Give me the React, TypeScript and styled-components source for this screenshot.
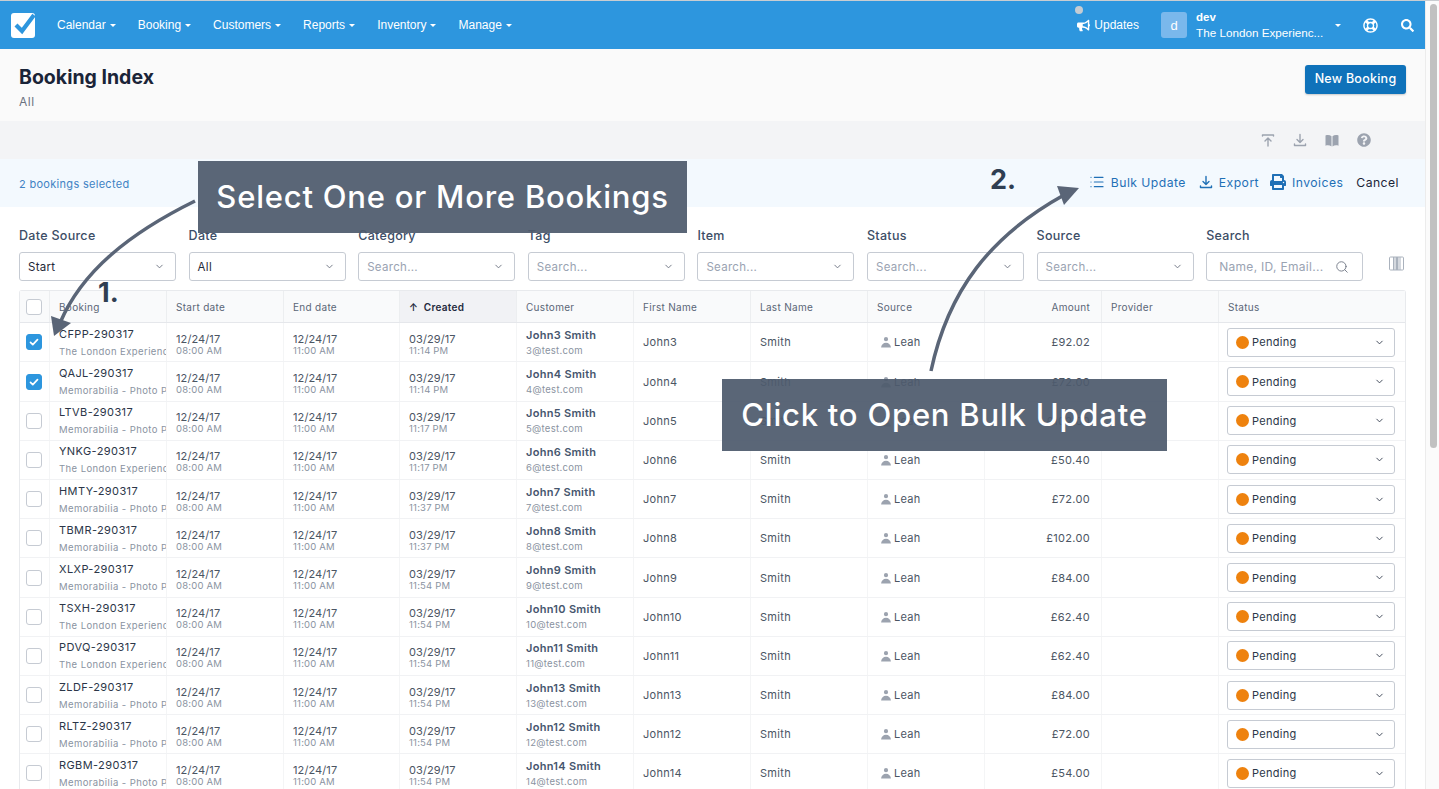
import React from "react";
import styled, { createGlobalStyle } from "styled-components";
import { FaBullhorn, FaRegLifeRing, FaSearch, FaQuestionCircle, FaPrint } from "react-icons/fa";
import { HiUser } from "react-icons/hi";
import { ChevronDown, Search, List } from "lucide-react";

const GlobalStyle = createGlobalStyle`
  html, body {
    margin: 0;
    height: 100%;
    overflow: hidden;
    background: #fff;
    font-family: Inter, "Liberation Sans", sans-serif;
  }
  * { box-sizing: border-box; }
`;

const Page = styled.div`
  position: relative;
  display: flex;
  width: 1439px;
  height: 789px;
  overflow: hidden;
  border-top: 1px solid #c9cdd1;
`;

const Main = styled.div`
  width: 1425px;
  flex: none;
`;

const ScrollTrack = styled.div`
  width: 14px;
  flex: none;
  padding: 3px 2px 0 4px;
  background: #fbfbfb;
  border-left: 1px solid #ececec;
`;

const ScrollThumb = styled.div`
  height: 444px;
  border-radius: 4px;
  background: #c1c1c1;
`;

const TopBar = styled.header`
  height: 48px;
  background: #2d96de;
  display: flex;
  align-items: center;
  padding: 0 11px 0 11px;
  color: #fff;
  font-family: "Liberation Sans", sans-serif;
  font-size: 12px;
`;

const Logo = styled.svg`
  width: 25px;
  height: 26px;
  margin-right: 21px;
`;

const Nav = styled.nav`
  display: flex;
  gap: 22px;
`;

const NavItem = styled.span`
  display: flex;
  align-items: center;
  gap: 4px;
`;

const Caret = styled.i`
  width: 0;
  height: 0;
  border-left: 3px solid transparent;
  border-right: 3px solid transparent;
  border-top: 3px solid #fff;
`;

const TopRight = styled.div`
  margin-left: auto;
  display: flex;
  align-items: center;
`;

const Updates = styled.span`
  position: relative;
  display: flex;
  align-items: center;
  gap: 4px;
  margin-right: 22px;
`;

const UpdateDot = styled.i`
  position: absolute;
  left: -2px;
  top: -12px;
  width: 8px;
  height: 8px;
  border-radius: 50%;
  background: #c4ccd3;
`;

const Avatar = styled.div`
  width: 26px;
  height: 26px;
  border-radius: 3px;
  background: #7ab8ec;
  display: flex;
  align-items: center;
  justify-content: center;
  font-size: 13px;
  margin-right: 9px;
`;

const Account = styled.div`
  width: 139px;
  line-height: 16px;
  margin-top: -1px;
  font-size: 11.7px;
`;

const AccountName = styled.div`
  font-size: 11.5px;
  font-weight: 700;
`;

const AccountCaret = styled(Caret)`
  margin-right: 22px;
`;

const TopIcon = styled.span<{ $gap: number }>`
  display: flex;
  margin-right: ${(p) => p.$gap}px;
`;

const PageHeader = styled.div`
  height: 72px;
  background: #fafafa;
  padding: 16px 19px 0;
  display: flex;
  justify-content: space-between;
`;

const Title = styled.h1`
  margin: 0;
  font-size: 19.5px;
  line-height: 24px;
  font-weight: 700;
  color: #1a2438;
`;

const SubTitle = styled.div`
  margin-top: 5px;
  font-size: 12px;
  line-height: 15px;
  letter-spacing: 0.5px;
  color: #6b7280;
`;

const NewBooking = styled.button`
  height: 29px;
  width: 101px;
  border: 0;
  border-radius: 3px;
  padding: 0 0 2px;
  background: #0f72ba;
  color: #fff;
  font: 500 12.5px Inter, sans-serif;
  letter-spacing: 0.25px;
  box-shadow: 0 1px 2px rgba(0, 0, 0, 0.2);
`;

const Toolbar = styled.div`
  height: 38px;
  background: #f3f4f6;
  display: flex;
  justify-content: flex-end;
  align-items: center;
  gap: 18px;
  padding-right: 54px;
  color: #9ca3af;
`;

const ToolIcon = styled.span`
  width: 14px;
  display: flex;
  justify-content: center;
`;

const SelectBar = styled.div`
  height: 48px;
  background: #f3f9fe;
  display: flex;
  align-items: center;
  justify-content: space-between;
  padding: 2px 26px 0 19px;
  font-size: 11px;
  letter-spacing: 0.3px;
  color: #3f83c4;
`;

const SelectActions = styled.div`
  display: flex;
  align-items: center;
  margin-top: -4px;
  font-size: 12.2px;
  letter-spacing: 0.45px;
  color: #1f70b6;
`;

const Action = styled.span<{ $gap: number }>`
  display: flex;
  align-items: center;
  gap: 6px;
  margin-right: ${(p) => p.$gap}px;
`;

const Cancel = styled.span`
  color: #1a2438;
`;

const Filters = styled.div`
  height: 83px;
  padding: 21px 19px 0;
  display: grid;
  grid-template-columns: repeat(8, 157px) 1fr;
  column-gap: 12.6px;
`;

const FilterLabel = styled.div`
  font-size: 12.5px;
  line-height: 16px;
  font-weight: 500;
  letter-spacing: 0.3px;
  color: #3c4d66;
  margin-bottom: 8px;
`;

const SelectBox = styled.div<{ $placeholder?: boolean }>`
  height: 29px;
  border: 1px solid #c6cbd3;
  border-radius: 3px;
  background: #fff;
  display: flex;
  align-items: center;
  justify-content: space-between;
  padding: 0 10px 0 8px;
  font-size: 11.5px;
  letter-spacing: 0.3px;
  color: ${(p) => (p.$placeholder ? "#9aa3b2" : "#1f2937")};
`;

const SearchBox = styled(SelectBox)`
  padding: 0 13px 0 12px;
  font-size: 12px;
`;

const ColumnsIcon = styled.svg`
  width: 15px;
  height: 15px;
  margin: 28px 0 0 13px;
`;

const Table = styled.div`
  margin: 0 19px;
  border: 1px solid #e8eaed;
  border-bottom: 0;
  border-radius: 3px 3px 0 0;
`;

const Row = styled.div<{ $head?: boolean }>`
  display: grid;
  grid-template-columns: 29px 117px 117px 116px 117px 117px 117px 117px 117px 117px 117px 1fr;
  height: ${(p) => (p.$head ? "32.3px" : "39.2px")};
  background: ${(p) => (p.$head ? "#f9fafb" : "#fff")};
  border-bottom: 1px solid ${(p) => (p.$head ? "#e5e7eb" : "#f1f2f4")};
`;

const HeadCell = styled.div<{ $active?: boolean; $right?: boolean }>`
  display: flex;
  align-items: center;
  justify-content: ${(p) => (p.$right ? "flex-end" : "flex-start")};
  padding: 0 ${(p) => (p.$right ? 11 : 10)}px 0 9px;
  border-left: 1px solid #eceef0;
  background: ${(p) => (p.$active ? "#f1f2f5" : "transparent")};
  font-size: 10px;
  letter-spacing: 0.3px;
  font-weight: ${(p) => (p.$active ? 600 : 400)};
  color: ${(p) => (p.$active ? "#1f2a3d" : "#5b6677")};
  &:first-child { border-left: 0; padding: 0 2px 0 0; justify-content: center; }
`;

const Cell = styled.div<{ $right?: boolean }>`
  display: flex;
  flex-direction: column;
  justify-content: center;
  align-items: ${(p) => (p.$right ? "flex-end" : "flex-start")};
  min-width: 0;
  overflow: hidden;
  padding: 0 ${(p) => (p.$right ? 11 : 10)}px 0 9px;
  border-left: 1px solid #f4f5f6;
  font-size: 11px;
  letter-spacing: 0.3px;
  color: #4b5563;
  &:first-child { border-left: 0; padding: 0 2px 0 0; align-items: center; }
`;

const CheckBox = styled.span<{ $on?: boolean }>`
  width: 16px;
  height: 16px;
  border-radius: 3px;
  border: 1px solid ${(p) => (p.$on ? "#2d96de" : "#c6cbd3")};
  background: ${(p) => (p.$on ? "#2d96de" : "#fff")};
  display: flex;
  align-items: center;
  justify-content: center;
`;

const Code = styled.div`
  font-size: 11px;
  line-height: 14px;
  letter-spacing: 0.4px;
  color: #2b3648;
`;

const Clipped = styled.div`
  font-size: 9.5px;
  line-height: 12px;
  letter-spacing: 0.42px;
  margin-top: 5px;
  color: #8a93a1;
  white-space: nowrap;
`;

const DateMain = styled.div`
  font-size: 11px;
  line-height: 12px;
  letter-spacing: 0.1px;
  color: #4b5563;
  margin-top: 5px;
`;

const DateSub = styled.div`
  font-size: 9.5px;
  line-height: 12px;
  letter-spacing: 0.2px;
  color: #8a93a1;
`;

const CustomerName = styled.div`
  font-size: 11px;
  line-height: 14px;
  font-weight: 600;
  letter-spacing: 0.3px;
  color: #46566e;
`;

const CustomerMail = styled.div`
  font-size: 9.5px;
  line-height: 13px;
  letter-spacing: 0.3px;
  margin-top: 2px;
  color: #8a93a1;
`;

const SourceTag = styled.div`
  display: flex;
  align-items: center;
  gap: 1px;
  svg { color: #9ca3af; margin-left: 2px; }
`;

const StatusCell = styled(Cell)`
  padding: 0 10px 0 8px;
  align-items: stretch;
`;

const StatusSelect = styled.div`
  height: 29px;
  border: 1px solid #c6cbd3;
  border-radius: 3px;
  display: flex;
  align-items: center;
  padding: 0 9px 0 8px;
  font-size: 11px;
  letter-spacing: 0.3px;
  color: #2b3648;
`;

const StatusDot = styled.i`
  width: 13px;
  height: 13px;
  border-radius: 50%;
  background: #ee820e;
  margin-right: 3px;
`;

const StatusChevron = styled.span`
  margin-left: auto;
  display: flex;
`;

const ArrowLayer = styled.svg`
  position: absolute;
  inset: 0;
  width: 1439px;
  height: 789px;
  pointer-events: none;
`;

const Callout = styled.div<{ $left: number; $top: number; $width: number }>`
  position: absolute;
  left: ${(p) => p.$left}px;
  top: ${(p) => p.$top}px;
  width: ${(p) => p.$width}px;
  height: 72px;
  padding-bottom: 2px;
  background: rgba(78, 90, 109, 0.93);
  color: #fff;
  display: flex;
  align-items: center;
  justify-content: center;
  font-size: 31px;
  font-weight: 500;
  letter-spacing: 0.78px;
  white-space: nowrap;
`;

const StepNumber = styled.div<{ $left: number; $top: number }>`
  position: absolute;
  left: ${(p) => p.$left}px;
  top: ${(p) => p.$top}px;
  font-size: 27px;
  line-height: 30px;
  font-weight: 700;
  color: #2f3e52;
`;

const navItems = ["Calendar", "Booking", "Customers", "Reports", "Inventory", "Manage"];

const filters = [
  { label: "Date Source", value: "Start" },
  { label: "Date", value: "All" },
  { label: "Category" },
  { label: "Tag" },
  { label: "Item" },
  { label: "Status" },
  { label: "Source" },
];

const LONDON = "The London Experience - Tours";
const MEMO = "Memorabilia - Photo Pack";

const rows = [
  { code: "CFPP", item: LONDON, time: "11:14 PM", n: 3, amount: "92.02", on: true },
  { code: "QAJL", item: MEMO, time: "11:14 PM", n: 4, amount: "72.00", on: true },
  { code: "LTVB", item: MEMO, time: "11:17 PM", n: 5, amount: "102.00" },
  { code: "YNKG", item: LONDON, time: "11:17 PM", n: 6, amount: "50.40" },
  { code: "HMTY", item: MEMO, time: "11:37 PM", n: 7, amount: "72.00" },
  { code: "TBMR", item: MEMO, time: "11:37 PM", n: 8, amount: "102.00" },
  { code: "XLXP", item: MEMO, time: "11:54 PM", n: 9, amount: "84.00" },
  { code: "TSXH", item: LONDON, time: "11:54 PM", n: 10, amount: "62.40" },
  { code: "PDVQ", item: LONDON, time: "11:54 PM", n: 11, amount: "62.40" },
  { code: "ZLDF", item: MEMO, time: "11:54 PM", n: 13, amount: "84.00" },
  { code: "RLTZ", item: MEMO, time: "11:54 PM", n: 12, amount: "72.00" },
  { code: "RGBM", item: MEMO, time: "11:54 PM", n: 14, amount: "54.00" },
];

const Tick = () => (
  <svg width="10" height="10" viewBox="0 0 10 10">
    <path d="M1.5 5.3l2.3 2.3 4.7-5" fill="none" stroke="#fff" strokeWidth="1.7" strokeLinecap="round" strokeLinejoin="round" />
  </svg>
);

const TrayArrow = ({ up }: { up?: boolean }) => (
  <svg width="14" height="14" viewBox="0 0 14 14" fill="none" stroke="currentColor" strokeWidth="1.4" strokeLinecap="round" strokeLinejoin="round">
    {up ? (
      <path d="M1.5 3V2h11v1M7 13V5M4 8l3-3 3 3" />
    ) : (
      <path d="M1.5 11v1.5h11V11M7 1.5v8M4 6.5l3 3 3-3" />
    )}
  </svg>
);

const BookIcon = () => (
  <svg width="14" height="13" viewBox="0 0 14 13" fill="currentColor">
    <path d="M0.5 1.5C2.6 0.7 4.8 0.9 6.5 2.2V12.4C4.8 11.2 2.6 11 0.5 11.7Z" />
    <path d="M13.5 1.5C11.4 0.7 9.2 0.9 7.5 2.2V12.4C9.2 11.2 11.4 11 13.5 11.7Z" />
  </svg>
);

export default function App() {
  return (
    <>
      <GlobalStyle />
      <Page>
        <Main>
          <TopBar>
            <Logo viewBox="0 0 25 26">
              <rect x="0" y="1" width="24" height="25" rx="3" fill="#fff" />
              <path d="M5 13l6 6L23 3" fill="none" stroke="#2d96de" strokeWidth="4.2" />
            </Logo>
            <Nav>
              {navItems.map((item) => (
                <NavItem key={item}>
                  {item}
                  <Caret />
                </NavItem>
              ))}
            </Nav>
            <TopRight>
              <Updates>
                <UpdateDot />
                <FaBullhorn size={13} />
                Updates
              </Updates>
              <Avatar>d</Avatar>
              <Account>
                <AccountName>dev</AccountName>
                The London Experienc...
              </Account>
              <AccountCaret />
              <TopIcon $gap={23}>
                <FaRegLifeRing size={15} />
              </TopIcon>
              <TopIcon $gap={0}>
                <FaSearch size={13} />
              </TopIcon>
            </TopRight>
          </TopBar>

          <PageHeader>
            <div>
              <Title>Booking Index</Title>
              <SubTitle>All</SubTitle>
            </div>
            <NewBooking>New Booking</NewBooking>
          </PageHeader>

          <Toolbar>
            <ToolIcon>
              <TrayArrow up />
            </ToolIcon>
            <ToolIcon>
              <TrayArrow />
            </ToolIcon>
            <ToolIcon>
              <BookIcon />
            </ToolIcon>
            <ToolIcon>
              <FaQuestionCircle size={14} />
            </ToolIcon>
          </Toolbar>

          <SelectBar>
            2 bookings selected
            <SelectActions>
              <Action $gap={13}>
                <List size={16} strokeWidth={1.8} />
                Bulk Update
              </Action>
              <Action $gap={11}>
                <TrayArrow />
                Export
              </Action>
              <Action $gap={13}>
                <FaPrint size={16} />
                Invoices
              </Action>
              <Cancel>Cancel</Cancel>
            </SelectActions>
          </SelectBar>

          <Filters>
            {filters.map((f) => (
              <div key={f.label}>
                <FilterLabel>{f.label}</FilterLabel>
                <SelectBox $placeholder={!f.value}>
                  {f.value || "Search..."}
                  <ChevronDown size={11} color="#6b7280" />
                </SelectBox>
              </div>
            ))}
            <div>
              <FilterLabel>Search</FilterLabel>
              <SearchBox $placeholder>
                Name, ID, Email...
                <Search size={14} strokeWidth={1.5} color="#6b7280" />
              </SearchBox>
            </div>
            <ColumnsIcon viewBox="0 0 15 15">
              <rect x="0.5" y="1" width="14" height="13" rx="1" fill="none" stroke="#aab2bd" />
              <rect x="4" y="1" width="1.5" height="13" fill="#aab2bd" />
              <rect x="6.5" y="1" width="3" height="13" fill="#aab2bd" />
              <rect x="10.5" y="1" width="1" height="13" fill="#aab2bd" />
            </ColumnsIcon>
          </Filters>

          <Table>
            <Row $head>
              <HeadCell>
                <CheckBox />
              </HeadCell>
              <HeadCell>Booking</HeadCell>
              <HeadCell>Start date</HeadCell>
              <HeadCell>End date</HeadCell>
              <HeadCell $active>↑&nbsp;&nbsp;Created</HeadCell>
              <HeadCell>Customer</HeadCell>
              <HeadCell>First Name</HeadCell>
              <HeadCell>Last Name</HeadCell>
              <HeadCell>Source</HeadCell>
              <HeadCell $right>Amount</HeadCell>
              <HeadCell>Provider</HeadCell>
              <HeadCell>Status</HeadCell>
            </Row>
            {rows.map((r) => (
              <Row key={r.code}>
                <Cell>
                  <CheckBox $on={r.on}>{r.on && <Tick />}</CheckBox>
                </Cell>
                <Cell>
                  <Code>{r.code}-290317</Code>
                  <Clipped>{r.item}</Clipped>
                </Cell>
                <Cell>
                  <DateMain>12/24/17</DateMain>
                  <DateSub>08:00 AM</DateSub>
                </Cell>
                <Cell>
                  <DateMain>12/24/17</DateMain>
                  <DateSub>11:00 AM</DateSub>
                </Cell>
                <Cell>
                  <DateMain>03/29/17</DateMain>
                  <DateSub>{r.time}</DateSub>
                </Cell>
                <Cell>
                  <CustomerName>John{r.n} Smith</CustomerName>
                  <CustomerMail>{r.n}@test.com</CustomerMail>
                </Cell>
                <Cell>John{r.n}</Cell>
                <Cell>Smith</Cell>
                <Cell>
                  <SourceTag>
                    <HiUser size={14} />
                    Leah
                  </SourceTag>
                </Cell>
                <Cell $right>£{r.amount}</Cell>
                <Cell />
                <StatusCell>
                  <StatusSelect>
                    <StatusDot />
                    Pending
                    <StatusChevron>
                      <ChevronDown size={11} color="#374151" />
                    </StatusChevron>
                  </StatusSelect>
                </StatusCell>
              </Row>
            ))}
          </Table>
        </Main>

        <ScrollTrack>
          <ScrollThumb />
        </ScrollTrack>

        <ArrowLayer viewBox="0 0 1439 789">
          <path d="M195 200C130 232 82 270 60 322" fill="none" stroke="#5a6577" strokeWidth="3.5" />
          <path d="M54 335L51 315L71 322Z" fill="#5a6577" />
          <path d="M931 370C948 290 990 235 1064 194" fill="none" stroke="#5a6577" strokeWidth="3.5" />
          <path d="M1079 187L1057 185L1064 204Z" fill="#5a6577" />
        </ArrowLayer>
        <Callout $left={198} $top={160} $width={489}>
          Select One or More Bookings
        </Callout>
        <Callout $left={722} $top={378} $width={445}>
          Click to Open Bulk Update
        </Callout>
        <StepNumber $left={98} $top={277}>
          1.
        </StepNumber>
        <StepNumber $left={990} $top={164}>
          2.
        </StepNumber>
      </Page>
    </>
  );
}
